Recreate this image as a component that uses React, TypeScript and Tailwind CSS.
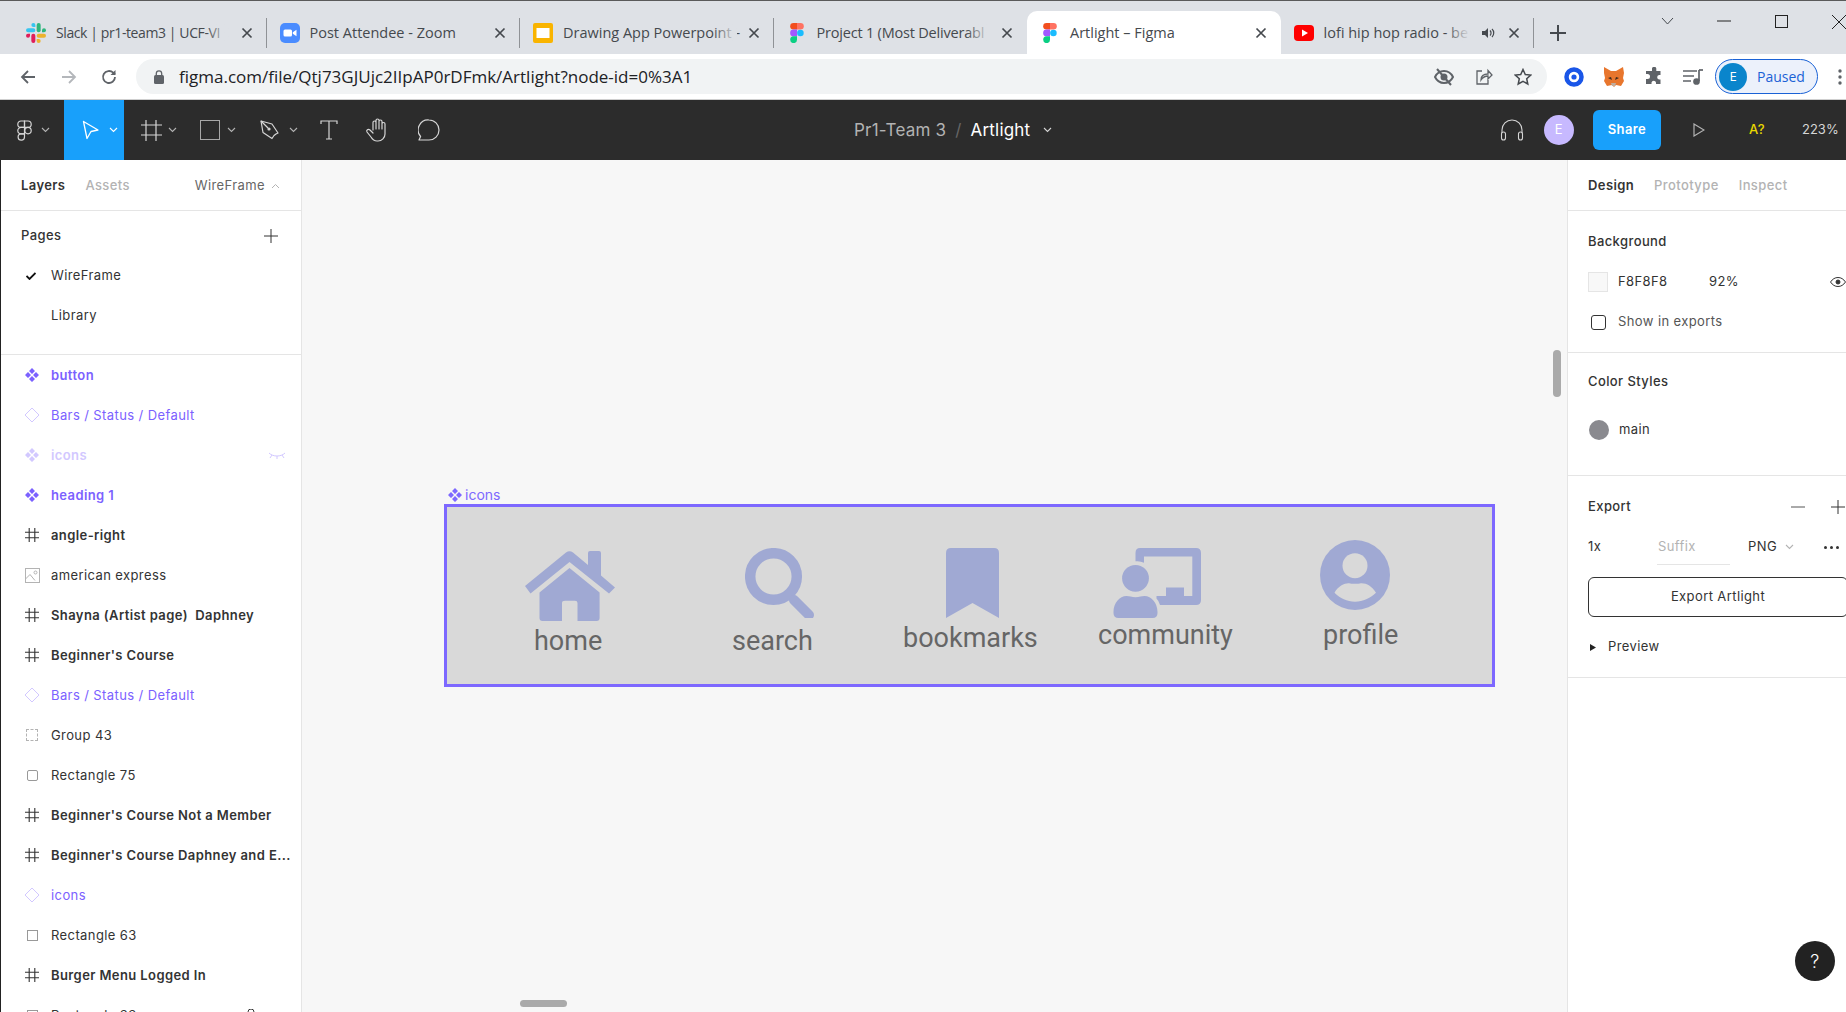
import React from "react";

const inter = "font-['Inter','Noto_Sans',sans-serif] tracking-[0.4px]";
const compPath =
  "M7 0l3 3-3 3-3-3zM7 8l3 3-3 3-3-3zM3 4l3 3-3 3-3-3zM11 4l3 3-3 3-3-3z";

function FigmaLogo({ size = 20 }: { size?: number }) {
  return (
    <svg width={size * 0.7} height={size} viewBox="0 0 14 20" className="ml-[3px] shrink-0">
      <path d="M3.5 0H7v6.6H3.5a3.3 3.3 0 0 1 0-6.6z" fill="#f24e1e" />
      <path d="M7 0h3.5a3.3 3.3 0 0 1 0 6.6H7z" fill="#ff7262" />
      <path d="M3.5 6.6H7v6.7H3.5a3.3 3.3 0 0 1 0-6.7z" fill="#a259ff" />
      <circle cx="10.4" cy="10" r="3.3" fill="#1abcfe" />
      <path d="M3.5 13.3H7v3.4a3.4 3.4 0 1 1-3.5-3.4z" fill="#0acf83" />
    </svg>
  );
}

function SlackLogo() {
  return (
    <svg width="20" height="20" viewBox="0 0 54 54" className="shrink-0">
      <g fill="#36c5f0">
        <path d="M19.86 0a5.4 5.4 0 0 0 0 10.8h5.4V5.4A5.4 5.4 0 0 0 19.86 0" />
        <path d="M19.86 14.4H5.46a5.4 5.4 0 0 0 0 10.8h14.4a5.4 5.4 0 0 0 0-10.8" />
      </g>
      <g fill="#2eb67d">
        <path d="M54 19.8a5.4 5.4 0 0 0-10.8 0v5.4h5.4A5.4 5.4 0 0 0 54 19.8" />
        <path d="M39.6 19.8V5.4a5.4 5.4 0 0 0-10.8 0v14.4a5.4 5.4 0 0 0 10.8 0" />
      </g>
      <g fill="#ecb22e">
        <path d="M34.2 54a5.4 5.4 0 0 0 0-10.8h-5.4v5.4a5.4 5.4 0 0 0 5.4 5.4" />
        <path d="M34.2 39.6h14.4a5.4 5.4 0 0 0 0-10.8H34.2a5.4 5.4 0 0 0 0 10.8" />
      </g>
      <g fill="#e01e5a">
        <path d="M0 34.2a5.4 5.4 0 0 0 5.4 5.4 5.4 5.4 0 0 0 5.4-5.4v-5.4H5.4A5.4 5.4 0 0 0 0 34.2" />
        <path d="M14.4 34.2v14.4a5.4 5.4 0 0 0 10.8 0V34.2a5.4 5.4 0 0 0-10.8 0" />
      </g>
    </svg>
  );
}

function ZoomLogo() {
  return (
    <svg width="20" height="20" viewBox="0 0 20 20" className="shrink-0">
      <rect width="20" height="20" rx="5" fill="#4a8cff" />
      <rect x="3.5" y="6.5" width="8.5" height="7" rx="1.5" fill="#fff" />
      <path d="M12.8 9.3 16.5 6.7v6.6l-3.7-2.6z" fill="#fff" />
    </svg>
  );
}

function SlidesLogo() {
  return (
    <svg width="20" height="20" viewBox="0 0 20 20" className="shrink-0">
      <rect width="20" height="20" rx="2" fill="#f9b400" />
      <rect x="3.5" y="5" width="13" height="10" fill="#fff" />
    </svg>
  );
}

function YouTubeLogo() {
  return (
    <svg width="20" height="20" viewBox="0 0 20 20" className="shrink-0">
      <rect x="0" y="2" width="20" height="16" rx="4" fill="#ff0000" />
      <path d="M8 6.5v7l6-3.5z" fill="#fff" />
    </svg>
  );
}

function TabX() {
  return (
    <svg width="12" height="12" viewBox="0 0 12 12" className="shrink-0">
      <path d="M1.5 1.5l9 9M10.5 1.5l-9 9" stroke="#45494e" strokeWidth="1.7" fill="none" />
    </svg>
  );
}

function Tab({
  icon,
  label,
  active,
  sep = true,
  speaker,
  fade = true,
  labelClass = "text-[14.5px]",
}: {
  icon: React.ReactNode;
  label: string;
  active?: boolean;
  sep?: boolean;
  speaker?: boolean;
  fade?: boolean;
  labelClass?: string;
}) {
  return (
    <div
      className={`relative flex h-[43px] w-[253.5px] shrink-0 items-center pl-[13px] pr-[14px] ${
        active ? "rounded-t-[10px] bg-white" : ""
      }`}
    >
      <div className="flex w-[30px] shrink-0 items-center">{icon}</div>
      <div className={`relative min-w-0 flex-1 whitespace-nowrap font-['Open_Sans',sans-serif] text-[#45494e] ${labelClass}`}>
        {label}
        {fade && !active && (
          <div className="absolute inset-y-0 right-0 w-[24px] bg-gradient-to-r from-transparent to-[#dee1e6]" />
        )}
      </div>
      {speaker ? (
        <svg width="14" height="14" viewBox="0 0 14 14" className="ml-[11px] mr-[13px] shrink-0">
          <path d="M1 5h3l3-3v10L4 9H1z" fill="#45494e" />
          <path d="M9 4.5a3.5 3.5 0 0 1 0 5M11 3a5.5 5.5 0 0 1 0 8" stroke="#45494e" fill="none" strokeWidth="1.2" />
        </svg>
      ) : (
        <div className="w-[11px] shrink-0" />
      )}
      <TabX />
      {sep && <div className="absolute right-0 top-[7px] h-[30px] w-px bg-[#8f9296]" />}
    </div>
  );
}

function Caret({ color = "#b3b3b3" }: { color?: string }) {
  return (
    <svg width="9" height="6" viewBox="0 0 9 6" className="shrink-0">
      <path d="M1 1l3.5 3.5L8 1" stroke={color} strokeWidth="1.1" fill="none" />
    </svg>
  );
}

function ToolBar() {
  const stroke = "#d6d6d6";
  return (
    <div className="flex h-[60px] shrink-0 items-center bg-[#2c2c2c]">
      <div className="flex h-full w-[64px] shrink-0 items-center gap-[9px] pl-[17px]">
        <svg width="15" height="21" viewBox="0 0 15 21" fill="none" stroke={stroke} strokeWidth="1.2">
          <path d="M7.5 1H4a3.2 3.2 0 0 0 0 6.4h3.5z" />
          <path d="M7.5 1H11a3.2 3.2 0 0 1 0 6.4H7.5z" />
          <path d="M7.5 7.4H4a3.2 3.2 0 0 0 0 6.4h3.5z" />
          <circle cx="11" cy="10.6" r="3.2" />
          <path d="M7.5 13.8H4a3.2 3.2 0 1 0 3.5 3.2z" />
        </svg>
        <Caret />
      </div>
      <div className="flex h-full w-[60px] shrink-0 items-center gap-[9px] bg-[#18a0fb] pl-[18px]">
        <svg width="18" height="20" viewBox="0 0 18 20" fill="none" stroke="#fff" strokeWidth="1.3" strokeLinejoin="round">
          <path d="M1.5 1.5 16 10l-7 1.5L5 18.5z" />
        </svg>
        <Caret color="#fff" />
      </div>
      <div className="flex h-full w-[59px] shrink-0 items-center gap-[6px] pl-[17px]">
        <svg width="21" height="21" viewBox="0 0 21 21" fill="none" stroke={stroke} strokeWidth="1.2">
          <path d="M0 5h21M0 15h21M5 0v21M15 0v21" />
        </svg>
        <Caret />
      </div>
      <div className="flex h-full w-[60px] shrink-0 items-center gap-[7px] pl-[17px]">
        <div className="h-[20px] w-[20px] border-[1.5px] border-[#a8a8a8]" />
        <Caret />
      </div>
      <div className="flex h-full w-[60px] shrink-0 items-center gap-[9px] pl-[17px]">
        <svg width="20" height="20" viewBox="0 0 20 20" fill="none" stroke={stroke} strokeWidth="1.2" strokeLinejoin="round">
          <path d="M1 1l11 3 6 9-2 1-2 1.5-1 1.5-1 1.5-9-6z" />
          <path d="M1 1l7 7" />
          <circle cx="9" cy="9" r="1" fill={stroke} />
        </svg>
        <Caret />
      </div>
      <div className="flex h-full w-[46px] shrink-0 items-center pl-[17px]">
        <svg width="18" height="20" viewBox="0 0 18 20" fill="none" stroke={stroke} strokeWidth="1.2">
          <path d="M1 4V1h16v3M9 1v18M6 19h6" />
        </svg>
      </div>
      <div className="flex h-full w-[50px] shrink-0 items-center pl-[16px]">
        <svg width="24" height="24" viewBox="0 0 24 24" fill="none" stroke={stroke} strokeWidth="1.2" strokeLinecap="round" strokeLinejoin="round">
          <path d="M8 12V4.5a1.5 1.5 0 0 1 3 0V11M11 11V2.5a1.5 1.5 0 0 1 3 0V11M14 11V3.5a1.5 1.5 0 0 1 3 0V11M17 11V6a1.5 1.5 0 0 1 3 0v10a7 7 0 0 1-7 7h-1c-3 0-4.5-1.5-6-4L2 14c-1-2 1-3.5 3-2l3 3" />
        </svg>
      </div>
      <div className="flex h-full w-[50px] shrink-0 items-center pl-[19px]">
        <svg width="22" height="22" viewBox="0 0 22 22" fill="none" stroke={stroke} strokeWidth="1.2" strokeLinejoin="round">
          <path d="M11 1a10 10 0 0 1 0 20H1l1.6-3.5A10 10 0 0 1 11 1z" />
        </svg>
      </div>
      <div className="ml-[405px] flex items-center whitespace-nowrap font-['Inter','Noto_Sans',sans-serif] text-[17px] leading-[20px] tracking-[0.2px]">
        <span className="text-[#b3b3b3]">Pr1-Team 3</span>
        <span className="mx-[9px] text-[#666]">/</span>
        <span className="text-white">Artlight</span>
        <span className="ml-[13px]">
          <Caret color="#d6d6d6" />
        </span>
      </div>
      <div className="flex-1" />
      <svg width="24" height="22" viewBox="0 0 24 22" fill="none" stroke="#d6d6d6" strokeWidth="1.1" className="shrink-0">
        <path d="M2 14V11a10 10 0 0 1 20 0v3" />
        <rect x="1.5" y="13" width="4" height="8" rx="2" />
        <rect x="18.5" y="13" width="4" height="8" rx="2" />
      </svg>
      <div className={`ml-[20px] flex h-[30px] w-[30px] shrink-0 items-center justify-center rounded-full bg-[#c7b9ff] ${inter} text-[13px] text-white`}>
        E
      </div>
      <div className={`ml-[19px] flex h-[40px] w-[68px] shrink-0 items-center justify-center rounded-[6px] bg-[#18a0fb] ${inter} text-[13px] font-semibold text-white`}>
        Share
      </div>
      <svg width="12" height="14" viewBox="0 0 12 14" fill="none" stroke="#b3b3b3" strokeWidth="1.2" className="ml-[32px] shrink-0">
        <path d="M1 1l10 6-10 6z" />
      </svg>
      <span className={`ml-[44px] ${inter} text-[13px] font-medium text-[#e8d800]`}>A?</span>
      <span className="ml-[37px] w-[44px] shrink-0 whitespace-nowrap font-['Inter','Noto_Sans',sans-serif] text-[13px] text-[#d6d6d6]">223%</span>
    </div>
  );
}

function AddressBar() {
  return (
    <div className="flex h-[45px] shrink-0 items-center bg-white pl-[20px]">
      <svg width="16" height="16" viewBox="0 0 16 16" fill="none" stroke="#5f6368" strokeWidth="1.8" className="shrink-0">
        <path d="M15 8H2M8 2 2 8l6 6" />
      </svg>
      <svg width="16" height="16" viewBox="0 0 16 16" fill="none" stroke="#b4b7bb" strokeWidth="1.8" className="ml-[25px] shrink-0">
        <path d="M1 8h13M8 2l6 6-6 6" />
      </svg>
      <svg width="18" height="18" viewBox="0 0 18 18" fill="none" stroke="#5f6368" strokeWidth="1.8" className="ml-[23px] shrink-0">
        <path d="M15 9a6 6 0 1 1-1.8-4.3L15 6.5" />
        <path d="M15.5 2v5h-5" fill="#5f6368" stroke="none" />
      </svg>
      <div className="ml-[18px] flex h-[35px] w-[1411px] shrink-0 items-center rounded-full bg-[#f1f3f4] pl-[18px]">
        <svg width="10" height="14" viewBox="0 0 10 14" className="shrink-0">
          <rect x="0" y="5" width="10" height="9" rx="1.5" fill="#5f6368" />
          <path d="M2.3 5V3.5a2.7 2.7 0 0 1 5.4 0V5" stroke="#5f6368" strokeWidth="1.3" fill="none" />
        </svg>
        <span className="ml-[15px] whitespace-nowrap font-['Open_Sans',sans-serif] text-[17px] text-[#202124]">
          figma.com/file/Qtj73GJUjc2IIpAP0rDFmk/Artlight?node-id=0%3A1
        </span>
        <div className="flex-1" />
        <svg width="20" height="18" viewBox="0 0 20 18" fill="none" stroke="#5f6368" strokeWidth="2" className="shrink-0">
          <path d="M1 9c2-4 5.5-6 9-6s7 2 9 6c-2 4-5.5 6-9 6s-7-2-9-6z" />
          <circle cx="10" cy="9" r="2.5" fill="#5f6368" />
          <path d="M3 1l14 16" />
        </svg>
        <svg width="18" height="18" viewBox="0 0 18 18" fill="none" stroke="#5f6368" strokeWidth="1.3" className="ml-[21px] shrink-0">
          <path d="M7 3H2v13h11v-4" />
          <path d="M6 12c0-4 3-6 7-6V2.5L17 7l-4 4V8c-3 0-5 1-7 4z" />
        </svg>
        <svg width="18" height="18" viewBox="0 0 18 18" fill="none" stroke="#45494e" strokeWidth="1.5" className="ml-[21px] shrink-0">
          <path d="M9 1.5l2.3 5 5.4.6-4 3.6 1.1 5.3L9 13.3 4.2 16l1.1-5.3-4-3.6 5.4-.6z" />
        </svg>
        <div className="w-[15px] shrink-0" />
      </div>
      <svg width="20" height="20" viewBox="0 0 20 20" className="ml-[17px] shrink-0">
        <circle cx="10" cy="10" r="7.5" fill="none" stroke="#1a56e8" strokeWidth="4.5" />
        <circle cx="10" cy="10" r="2.6" fill="#1a56e8" />
      </svg>
      <svg width="21" height="20" viewBox="0 0 21 20" className="ml-[19px] shrink-0">
        <path d="M1 0l7 4h5l7-4 1 6-1 5 1 3-3 5-5-1-2 2-2-2-5 1-3-5 1-3-1-5z" fill="#e8762d" />
        <path d="M5 11l3-1 1 3zM16 11l-3-1-1 3z" fill="#3d2a1e" />
        <path d="M8 16h5l-1 3H9z" fill="#c0ad9e" />
      </svg>
      <svg width="19" height="19" viewBox="0 0 19 19" className="ml-[21px] shrink-0">
        <path d="M7 1.5a2.2 2.2 0 0 1 4.3 0V4h4.2v4H14a2.3 2.3 0 0 0 0 4.5h1.5V17H11v-1.5a2.3 2.3 0 0 0-4.5 0V17H1v-5h1.5a2.5 2.5 0 0 0 0-5H1V4h6z" fill="#5f6368" />
      </svg>
      <svg width="20" height="18" viewBox="0 0 20 18" fill="none" stroke="#5f6368" strokeWidth="1.7" className="ml-[19px] shrink-0">
        <path d="M0 3h14M0 8h11M0 13h8" />
        <path d="M16 2v11" />
        <circle cx="13.5" cy="13.5" r="2.5" fill="#5f6368" />
        <path d="M16 2h4" />
      </svg>
      <div className="ml-[12px] flex h-[35px] w-[103px] shrink-0 items-center rounded-full border border-[#1a62d6] bg-[#ecf1fb] pl-[3px]">
        <div className="flex h-[28px] w-[28px] items-center justify-center rounded-full bg-[#0a85cc] font-['Open_Sans',sans-serif] text-[13px] text-white">
          E
        </div>
        <span className="ml-[10px] font-['Open_Sans',sans-serif] text-[14px] text-[#1a62d6]">Paused</span>
      </div>
      <svg width="4" height="16" viewBox="0 0 4 16" className="ml-[20px] shrink-0">
        <circle cx="2" cy="2" r="1.7" fill="#5f6368" />
        <circle cx="2" cy="8" r="1.7" fill="#5f6368" />
        <circle cx="2" cy="14" r="1.7" fill="#5f6368" />
      </svg>
    </div>
  );
}

function LayerIcon({ type, light }: { type: string; light?: boolean }) {
  if (type === "comp")
    return (
      <svg width="14" height="14" viewBox="0 0 14 14" fill={light ? "#d2c8ff" : "#7b61ff"}>
        <path d={compPath} />
      </svg>
    );
  if (type === "inst")
    return (
      <svg width="16" height="16" viewBox="0 0 16 16" fill="none" stroke="#d2c8ff" strokeWidth="1">
        <path d="M8 1l7 7-7 7-7-7z" />
      </svg>
    );
  if (type === "frame")
    return (
      <svg width="14" height="14" viewBox="0 0 14 14" fill="none" stroke="#333" strokeWidth="1.1">
        <path d="M0 4.2h14M0 9.8h14M4.2 0v14M9.8 0v14" />
      </svg>
    );
  if (type === "image")
    return (
      <svg width="15" height="15" viewBox="0 0 15 15" fill="none" stroke="#b3b3b3" strokeWidth="1">
        <rect x="0.5" y="0.5" width="14" height="14" />
        <path d="M0.5 11l4.500-4.500 5 6" />
        <circle cx="10.5" cy="4.5" r="1.5" />
      </svg>
    );
  if (type === "group")
    return <div className="h-[12px] w-[12px] border border-dashed border-[#b3b3b3]" />;
  if (type === "rrect") return <div className="h-[11px] w-[11px] rounded-[2px] border border-[#999]" />;
  return <div className="h-[11px] w-[11px] border border-[#999]" />;
}

type Layer = { icon: string; name: string; cls: string; hidden?: boolean };

const layers: Layer[] = [
  { icon: "comp", name: "button", cls: "text-[#7b61ff] font-semibold" },
  { icon: "inst", name: "Bars / Status / Default", cls: "text-[#7b61ff]" },
  { icon: "comp", name: "icons", cls: "text-[#d2c8ff] font-semibold", hidden: true },
  { icon: "comp", name: "heading 1", cls: "text-[#7b61ff] font-semibold" },
  { icon: "frame", name: "angle-right", cls: "text-[#333] font-semibold" },
  { icon: "image", name: "american express", cls: "text-[#333]" },
  { icon: "frame", name: "Shayna (Artist page)  Daphney", cls: "text-[#333] font-semibold" },
  { icon: "frame", name: "Beginner's Course", cls: "text-[#333] font-semibold" },
  { icon: "inst", name: "Bars / Status / Default", cls: "text-[#7b61ff]" },
  { icon: "group", name: "Group 43", cls: "text-[#333]" },
  { icon: "rrect", name: "Rectangle 75", cls: "text-[#333]" },
  { icon: "frame", name: "Beginner's Course Not a Member", cls: "text-[#333] font-semibold" },
  { icon: "frame", name: "Beginner's Course Daphney and E...", cls: "text-[#333] font-semibold" },
  { icon: "inst", name: "icons", cls: "text-[#7b61ff]" },
  { icon: "rect", name: "Rectangle 63", cls: "text-[#333]" },
  { icon: "frame", name: "Burger Menu Logged In", cls: "text-[#333] font-semibold" },
  { icon: "rect", name: "Rectangle 33", cls: "text-[#333]" },
];

function Plus({ size = 14 }: { size?: number }) {
  return (
    <svg width={size} height={size} viewBox="0 0 14 14" stroke="#333" strokeWidth="1" fill="none" className="shrink-0">
      <path d="M0 7h14M7 0v14" />
    </svg>
  );
}

function LeftPanel() {
  return (
    <div className={`flex h-full w-[302px] shrink-0 flex-col overflow-hidden border-l border-r border-l-[#222] border-r-[#e5e5e5] bg-white ${inter} text-[13px] text-[#333]`}>
      <div className="flex h-[51px] shrink-0 items-center border-b border-[#e5e5e5] pl-[20px] pr-[21px] pt-[2px]">
        <span className="font-semibold">Layers</span>
        <span className="ml-[20px] font-medium text-[#b3b3b3]">Assets</span>
        <span className="ml-auto text-[#666]">WireFrame</span>
        <svg width="9" height="6" viewBox="0 0 9 6" fill="none" stroke="#b3b3b3" className="ml-[6px]">
          <path d="M1 5l3.5-3.5L8 5" />
        </svg>
      </div>
      <div className="flex h-[144px] shrink-0 flex-col border-b border-[#e5e5e5]">
        <div className="flex h-[49px] shrink-0 items-center pl-[20px] pr-[23px]">
          <span className="font-medium">Pages</span>
          <span className="ml-auto">
            <Plus />
          </span>
        </div>
        <div className="-mt-[4px] flex h-[40px] items-center">
          <svg width="10" height="8" viewBox="0 0 10 8" fill="none" stroke="#111" strokeWidth="1.8" className="ml-[25px]">
            <path d="M0.5 4l3 3L9.5 1" />
          </svg>
          <span className="ml-[15px]">WireFrame</span>
        </div>
        <div className="flex h-[40px] items-center pl-[50px]">Library</div>
      </div>
      <div className="flex flex-col">
        {layers.map((l, i) => (
          <div key={i} className="relative flex h-[40px] shrink-0 items-center">
            <div className="flex w-[50px] shrink-0 pl-[23px]">
              <div className="flex w-[16px] justify-center">
                <LayerIcon type={l.icon} light={l.hidden} />
              </div>
            </div>
            <span className={`w-[245px] truncate whitespace-pre pt-[2px] ${l.cls}`}>{l.name}</span>
            {l.hidden && (
              <svg width="18" height="8" viewBox="0 0 18 8" fill="none" stroke="#d2c8ff" className="absolute left-[267px] top-[17px]">
                <path d="M1 1c4 4 12 4 16 0M4 3L2 6M14 3l2 3M9 4v3" />
              </svg>
            )}
            {i === layers.length - 1 && (
              <svg width="10" height="12" viewBox="0 0 10 12" fill="none" stroke="#333" className="absolute left-[245px] top-[14px]">
                <path d="M2 5V3a3 3 0 0 1 6 0v2M1 5h8v6H1z" />
              </svg>
            )}
          </div>
        ))}
      </div>
    </div>
  );
}

function HomeIcon() {
  return (
    <svg width="90" height="70" viewBox="0 0 90 70" fill="#a0a9d3">
      <path d="M0 35 41 1.5q3.5-2.5 7 0L63 14V2q0-2 2-2h9q2 0 2 2v22.5L90 36.5 84 42.5 44.5 11 5.5 42.5z" />
      <path d="M44.5 17 74.6 41.5V67q0 3-3 3H52.5V52q0-2.3-2.5-2.3H40q-3 0-3 2.3v18H17.5q-3 0-3-3V41.5z" />
    </svg>
  );
}

function SearchIcon() {
  return (
    <svg width="70" height="70" viewBox="0 0 70 70" fill="none" stroke="#a0a9d3">
      <circle cx="28.5" cy="28.5" r="23.3" strokeWidth="10.5" />
      <path d="M49 52l15 15" strokeWidth="10" strokeLinecap="round" />
    </svg>
  );
}

function BookmarkIcon() {
  return (
    <svg width="53" height="70" viewBox="0 0 53 70" fill="#a0a9d3">
      <path d="M5 0h43q5 0 5 5v65L26.5 55 0 70V5q0-5 5-5z" />
    </svg>
  );
}

function CommunityIcon() {
  return (
    <svg width="88" height="70" viewBox="0 0 88 70" fill="#a0a9d3">
      <path
        fillRule="evenodd"
        d="M27 0h56q5 0 5 5v47q0 5-5 5H47q-1-4-3.5-6.5V48H53V39.5h18V48h8.3V8.5H31V14.7q-4-2-8.5-1.4V5q0-5 4.500-5z"
      />
      <circle cx="22.5" cy="30.3" r="13.4" />
      <path d="M0.5 64c0-9 6-16 13-16 3 0 5 1.2 9 1.2s6-1.2 9-1.2c7 0 13 7 13 16v1q0 5-5 5h-34q-5 0-5-5z" />
    </svg>
  );
}

function ProfileIcon() {
  return (
    <svg width="70" height="70" viewBox="0 0 70 70">
      <circle cx="35" cy="35" r="35" fill="#a0a9d3" />
      <circle cx="35" cy="25.7" r="12.5" fill="#d9d9d9" />
      <path
        d="M14.5 52.7C18 46 25 43 29 43.3c3 .7 9 .7 12 0 5-.3 11 2.700 15 9.400-6 5.500-13 9-21 9s-15-3.500-20.500-9z"
        fill="#d9d9d9"
      />
    </svg>
  );
}

function FrameNode({ x, y, tx, ty, label, children }: { x: number; y: number; tx: number; ty: number; label: string; children: React.ReactNode }) {
  return (
    <>
      <div className="absolute" style={{ left: x, top: y }}>
        {children}
      </div>
      <span
        className="absolute whitespace-nowrap font-['Roboto',sans-serif] text-[27px] leading-[32px] text-[#666]"
        style={{ left: tx, top: ty }}
      >
        {label}
      </span>
    </>
  );
}

function Canvas() {
  return (
    <div className="relative h-full min-w-0 flex-1 overflow-hidden bg-[#f7f7f7]">
      <div className="absolute left-[146px] top-[327px] flex items-center gap-[3px]">
        <svg width="14" height="14" viewBox="0 0 14 14" fill="#7d68ff">
          <path d={compPath} />
        </svg>
        <span className="font-['Inter','Noto_Sans',sans-serif] text-[14px] leading-[16px] text-[#7d68ff]">icons</span>
      </div>
      <div className="absolute left-[142px] top-[344px] h-[183px] w-[1051px] border-[3px] border-[#7d68ff] bg-[#d9d9d9]">
        <FrameNode x={78} y={44} tx={87} ty={118} label="home">
          <HomeIcon />
        </FrameNode>
        <FrameNode x={298} y={41} tx={285} ty={118} label="search">
          <SearchIcon />
        </FrameNode>
        <FrameNode x={499} y={41} tx={456} ty={115} label="bookmarks">
          <BookmarkIcon />
        </FrameNode>
        <FrameNode x={666} y={41} tx={651} ty={112} label="community">
          <CommunityIcon />
        </FrameNode>
        <FrameNode x={873} y={33} tx={876} ty={112} label="profile">
          <ProfileIcon />
        </FrameNode>
      </div>
      <div className="absolute left-[1251px] top-[190px] h-[47px] w-[8px] rounded-full bg-[#aaaaaa]" />
      <div className="absolute left-[218px] top-[840px] h-[7px] w-[47px] rounded-full bg-[#aaaaaa]" />
    </div>
  );
}

function RightPanel() {
  return (
    <div className={`relative flex h-full w-[279px] shrink-0 flex-col overflow-hidden border-l border-[#e5e5e5] bg-white ${inter} text-[13px] text-[#333]`}>
      <div className="flex h-[51px] shrink-0 items-center border-b border-[#e5e5e5] pl-[20px] pt-[2px]">
        <span className="font-semibold">Design</span>
        <span className="ml-[20px] font-medium text-[#b3b3b3]">Prototype</span>
        <span className="ml-[20px] font-medium text-[#b3b3b3]">Inspect</span>
      </div>
      <div className="h-[142px] shrink-0 border-b border-[#e5e5e5] pt-[21px]">
        <div className="flex h-[20px] items-center pl-[20px] font-medium">Background</div>
        <div className="mt-[20px] flex h-[20px] items-center pl-[20px]">
          <div className="h-[20px] w-[20px] border border-[#e5e5e5] bg-[#f8f8f8]" />
          <span className="ml-[10px] w-[91px]">F8F8F8</span>
          <span>92%</span>
          <svg width="16" height="10" viewBox="0 0 16 10" fill="none" stroke="#333" className="ml-auto shrink-0">
            <path d="M0.5 5c2-3 4.5-4.500 7.500-4.500S13.5 2 15.5 5c-2 3-4.500 4.500-7.500 4.500S2.500 8 0.500 5z" />
            <circle cx="8" cy="5" r="2" fill="#333" />
          </svg>
        </div>
        <div className="mt-[20px] flex h-[20px] items-center pl-[23px]">
          <div className="h-[15px] w-[15px] rounded-[3px] border border-[#333]" />
          <span className="ml-[12px] text-[#555]">Show in exports</span>
        </div>
      </div>
      <div className="h-[123px] shrink-0 border-b border-[#e5e5e5] pt-[19px]">
        <div className="flex h-[20px] items-center pl-[20px] font-medium">Color Styles</div>
        <div className="mt-[28px] flex h-[20px] items-center pl-[21px]">
          <div className="h-[20px] w-[20px] rounded-full bg-[#8a8a8f]" />
          <span className="ml-[10px]">main</span>
        </div>
      </div>
      <div className="h-[202px] w-[300px] shrink-0 border-b border-[#e5e5e5] pt-[21px]">
        <div className="flex h-[20px] items-center pl-[20px]">
          <span className="font-medium">Export</span>
          <svg width="14" height="2" viewBox="0 0 14 2" className="ml-[160px] shrink-0" stroke="#555">
            <path d="M0 1h14" />
          </svg>
          <span className="ml-[26px]">
            <Plus />
          </span>
        </div>
        <div className="mt-[16px] flex h-[28px] items-center pl-[20px]">
          <span className="w-[69px]">1x</span>
          <div className="flex h-[36px] w-[73px] items-center border-b border-[#e5e5e5] pl-[1px] text-[#b3b3b3]">Suffix</div>
          <span className="ml-[18px]">PNG</span>
          <span className="ml-[8px]">
            <Caret />
          </span>
          <div className="ml-[30px] flex gap-[3px]">
            <div className="h-[3px] w-[3px] rounded-full bg-[#333]" />
            <div className="h-[3px] w-[3px] rounded-full bg-[#333]" />
            <div className="h-[3px] w-[3px] rounded-full bg-[#333]" />
          </div>
        </div>
        <div className="ml-[20px] mt-[16px] flex h-[40px] w-[260px] items-center justify-center rounded-[6px] border border-[#333]">
          Export Artlight
        </div>
        <div className="mt-[20px] flex h-[20px] items-center pl-[22px]">
          <svg width="6" height="7" viewBox="0 0 6 7" className="shrink-0">
            <path d="M0 0l6 3.5L0 7z" fill="#222" />
          </svg>
          <span className="ml-[12px]">Preview</span>
        </div>
      </div>
    </div>
  );
}

export default function App() {
  return (
    <div className="relative flex h-[1012px] w-[1846px] flex-col overflow-hidden bg-white">
      <div className="flex h-[54px] shrink-0 items-end border-t border-[#5a5a5a] bg-[#dee1e6] pl-[13px]">
        <Tab icon={<SlackLogo />} label="Slack | pr1-team3 | UCF-VI" labelClass="text-[14px] tracking-[-0.4px]" />
        <Tab icon={<ZoomLogo />} label="Post Attendee - Zoom" fade={false} />
        <Tab icon={<SlidesLogo />} label="Drawing App Powerpoint -" />
        <Tab icon={<FigmaLogo />} label="Project 1 (Most Deliverabl" labelClass="text-[14.5px] tracking-[-0.2px]" sep={false} />
        <Tab icon={<FigmaLogo />} label="Artlight – Figma" active sep={false} />
        <Tab icon={<YouTubeLogo />} label="lofi hip hop radio - be" speaker />
        <div className="ml-[16px] flex h-[43px] items-center">
          <svg width="16" height="16" viewBox="0 0 16 16" stroke="#45494e" strokeWidth="2" fill="none">
            <path d="M0 8h16M8 0v16" />
          </svg>
        </div>
        <div className="ml-auto flex h-full items-start pr-0 pt-[15px]">
          <svg width="13" height="8" viewBox="0 0 13 8" fill="none" stroke="#45494e" className="mt-[1px]">
            <path d="M1 1l5.5 6L12 1" />
          </svg>
          <svg width="14" height="2" viewBox="0 0 14 2" stroke="#222" className="ml-[43px] mt-[4px]">
            <path d="M0 1h14" />
          </svg>
          <div className="ml-[44px] mt-[-1px] h-[13px] w-[13px] border-[1.5px] border-[#222]" />
          <svg width="14" height="14" viewBox="0 0 14 14" stroke="#222" fill="none" className="ml-[44px] mt-[-1px]">
            <path d="M0 0l14 14M14 0L0 14" />
          </svg>
        </div>
      </div>
      <AddressBar />
      <div className="h-px shrink-0 bg-[#cfcfcf]" />
      <ToolBar />
      <div className="flex min-h-0 flex-1">
        <LeftPanel />
        <Canvas />
        <RightPanel />
      </div>
      <div className={`absolute left-[1795px] top-[941px] flex h-[40px] w-[40px] items-center justify-center rounded-full bg-[#222] ${inter} text-[18px] font-light text-white`}>
        ?
      </div>
    </div>
  );
}
